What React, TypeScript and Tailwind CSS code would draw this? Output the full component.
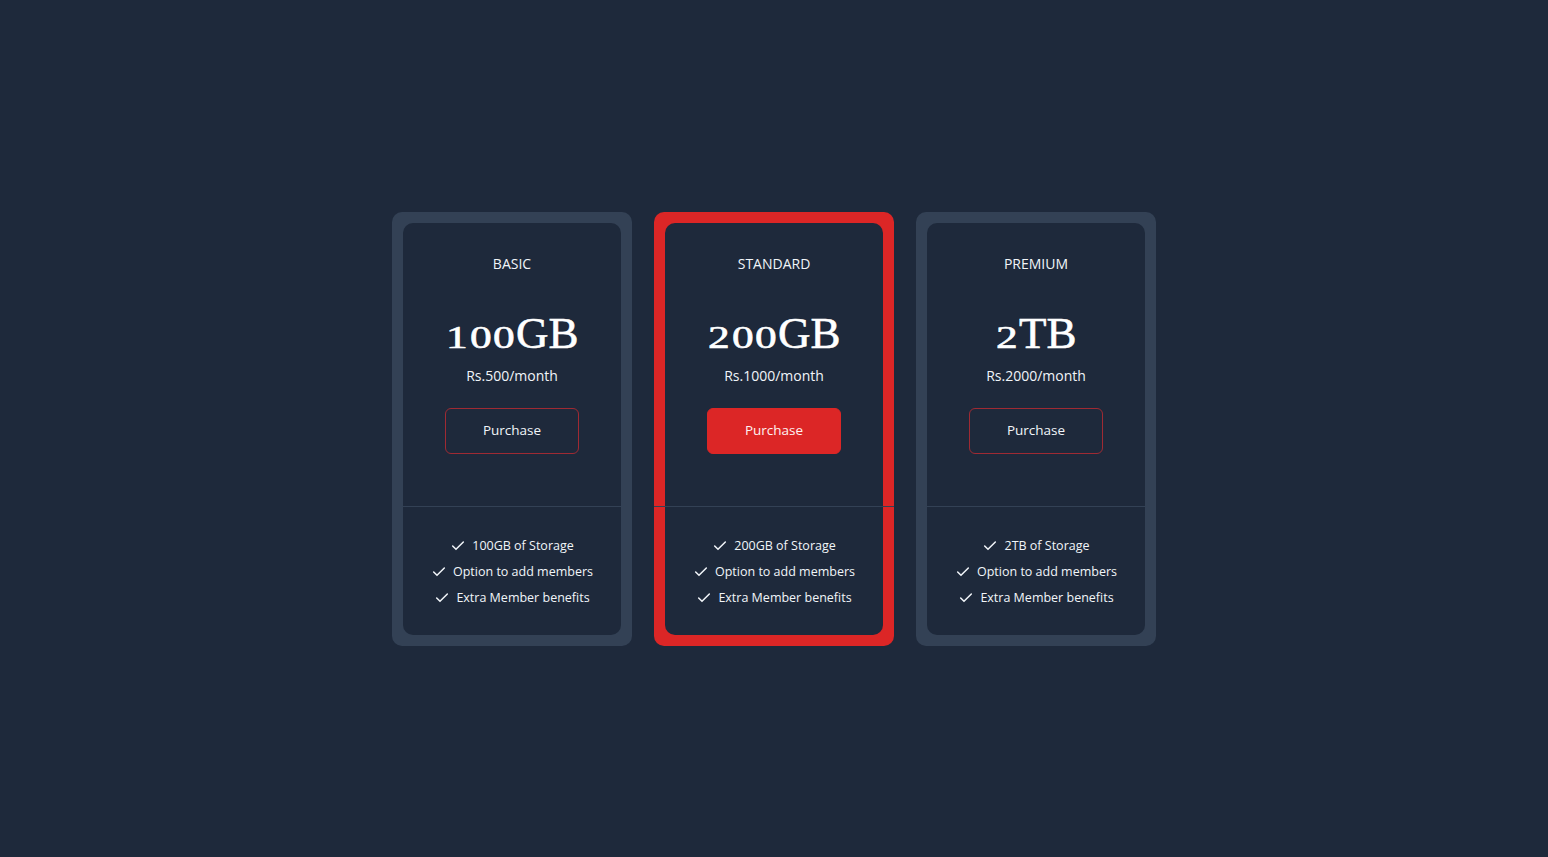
import React from 'react';
import { Check } from 'lucide-react';

interface Plan {
  name: string;
  size: string;
  price: string;
  storage: string;
  featured?: boolean;
}

const plans: Plan[] = [
  { name: 'BASIC', size: '100GB', price: 'Rs.500/month', storage: '100GB of Storage' },
  { name: 'STANDARD', size: '200GB', price: 'Rs.1000/month', storage: '200GB of Storage', featured: true },
  { name: 'PREMIUM', size: '2TB', price: 'Rs.2000/month', storage: '2TB of Storage' },
];

// Georgia-style old-style figures: digits sit at x-height and are round
const OldStyle: React.FC<{ text: string }> = ({ text }) => (
  <>
    {text.split('').map((ch, i) =>
      /[0-9]/.test(ch) ? (
        <span key={i} className="inline-block text-[31px] scale-x-[1.4] px-[4px]">{ch}</span>
      ) : (
        <span key={i}>{ch}</span>
      )
    )}
  </>
);

const PlanCard: React.FC<{ plan: Plan }> = ({ plan }) => {
  return (
    <div
      className={`w-[240px] flex flex-col p-[11px] rounded-[10px] ${
        plan.featured ? 'bg-[#dc2626]' : 'bg-[#334155]'
      }`}
    >
      {/* Top: title, size, price, button */}
      <div className="bg-[#1e293b] rounded-t-[10px] flex flex-col items-center pt-[32px] pb-[52px]">
        <div className="text-[14px] text-slate-100 leading-[18px]">{plan.name}</div>
        <div className="mt-[34px] text-[45px] leading-[52px] text-white font-['Liberation_Serif',serif] [-webkit-text-stroke:0.6px_white]">
          <OldStyle text={plan.size} />
        </div>
        <div className="mt-[2px] text-[14px] text-slate-100 leading-[20px]">{plan.price}</div>
        <button
          className={`mt-[22px] w-[134px] h-[46px] rounded-[6px] text-[13.5px] ${
            plan.featured
              ? 'bg-[#dc2626] text-red-50 border border-[#dc2626]'
              : 'border border-[#9f2a33] text-slate-100'
          }`}
        >
          Purchase
        </button>
      </div>

      {/* Divider crosses the whole card */}
      <div className="-mx-[11px] h-px bg-[#334155]"></div>

      {/* Bottom: features */}
      <div className="bg-[#1e293b] rounded-b-[10px] flex flex-col items-center pt-[26px] pb-[24px] text-[12.5px] text-slate-100 leading-[26px]">
        {[plan.storage, 'Option to add members', 'Extra Member benefits'].map((f) => (
          <div key={f} className="flex items-center gap-[6px]">
            <Check className="w-[16px] h-[16px]" strokeWidth={2.25} />
            <span>{f}</span>
          </div>
        ))}
      </div>
    </div>
  );
};

const App: React.FC = () => {
  return (
    <div className="min-h-screen w-full bg-[#1e293b] flex items-center justify-center font-['Open_Sans',sans-serif]">
      <div className="flex gap-[22px]">
        {plans.map((p) => (
          <PlanCard key={p.name} plan={p} />
        ))}
      </div>
    </div>
  );
};

export default App;
